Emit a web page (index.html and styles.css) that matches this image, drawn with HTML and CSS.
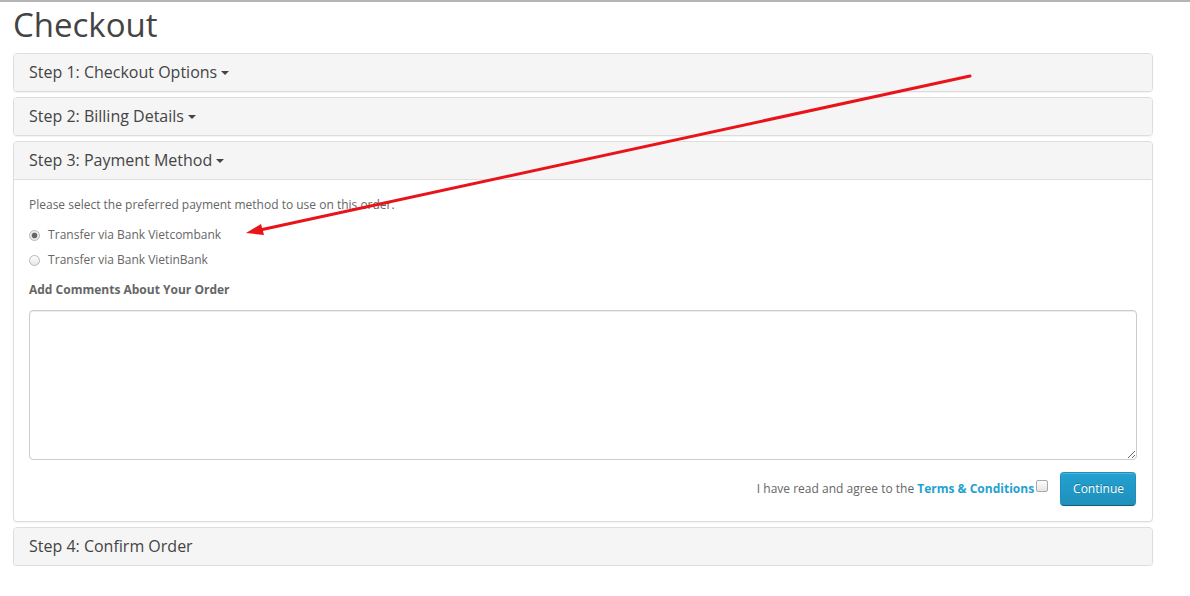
FILE: index.html
```html
<!DOCTYPE html>
<html lang="en">
  <head>
    <meta charset="UTF-8" />
    <meta name="viewport" content="width=device-width, initial-scale=1.0" />
    <title>Checkout</title>
    <link rel="stylesheet" href="styles.css">
  </head>
  <body>
    <div id="content">
      <h1>Checkout</h1>
      <div class="panel-group">
        <div class="panel">
          <div class="panel-heading">Step 1: Checkout Options <span class="caret"></span></div>
        </div>
        <div class="panel">
          <div class="panel-heading">Step 2: Billing Details <span class="caret"></span></div>
        </div>
        <div class="panel">
          <div class="panel-heading">Step 3: Payment Method <span class="caret"></span></div>
          <div class="panel-body">
            <p>Please select the preferred payment method to use on this order.</p>
            <div class="radio">
              <label><input type="radio" name="payment_method" checked /> Transfer via Bank Vietcombank</label>
            </div>
            <div class="radio">
              <label><input type="radio" name="payment_method" /> Transfer via Bank VietinBank</label>
            </div>
            <p><strong>Add Comments About Your Order</strong></p>
            <textarea class="comment" rows="8"></textarea>
            <div class="buttons">
              <span class="agree">I have read and agree to the <a href="#" class="terms">Terms &amp; Conditions</a></span>
              <input type="checkbox" class="check" />
              <button class="btn-primary">Continue</button>
            </div>
          </div>
        </div>
        <div class="panel">
          <div class="panel-heading">Step 4: Confirm Order</div>
        </div>
      </div>
    </div>

    <!-- annotation arrow drawn over the page -->
    <svg class="arrow" width="1190" height="596" viewBox="0 0 1190 596">
      <line x1="970" y1="76" x2="260" y2="230" stroke="#e8141a" stroke-width="3" stroke-linecap="round" />
      <polygon points="246,233 264,235 261,224" fill="#e8141a" />
    </svg>
  </body>
</html>
```

FILE: styles.css
```css
/* General Page Styling */
body {
  margin: 0;
  font-family: "Open Sans", "DejaVu Sans", sans-serif;
  font-size: 12px;
  line-height: 20px;
  color: #666666;
  background: #ffffff;
  border-top: 2px solid #b4b4b4;
}

#content {
  width: 1140px;
  padding-left: 13px;
}

h1 {
  font-size: 33px;
  font-weight: normal;
  line-height: 36px;
  color: #444444;
  margin: 5px 0 10px 0;
}

/* Panels */
.panel {
  border: 1px solid #dddddd;
  border-radius: 4px;
  background: #ffffff;
  box-shadow: 0 1px 1px rgba(0, 0, 0, 0.05);
}

.panel + .panel {
  margin-top: 5px;
}

.panel-heading {
  background-color: #f5f5f5;
  padding: 10px 15px;
  font-size: 16px;
  line-height: 17px;
  height: 17px;
  color: #444444;
  border-radius: 3px;
}

.panel-body {
  border-top: 1px solid #dddddd;
  padding: 15px;
}

.caret {
  display: inline-block;
  width: 0;
  height: 0;
  vertical-align: middle;
  border-top: 4px solid #444444;
  border-left: 4px solid transparent;
  border-right: 4px solid transparent;
  position: relative;
  top: -1px;
}

p {
  margin: 0 0 10px 0;
}

strong {
  font-weight: bold;
}

/* Radios */
.radio {
  margin: 10px 0;
}

.radio + .radio {
  margin-top: -5px;
}

.radio label {
  display: block;
  min-height: 20px;
  padding-left: 20px;
}

.radio input {
  appearance: none;
  width: 11px;
  height: 11px;
  margin: 0 5px 0 -20px;
  border: 1px solid #b8b8b8;
  border-radius: 50%;
  background: linear-gradient(#fdfdfd, #e6e6e6);
  vertical-align: -2px;
}

.radio input:checked {
  background: radial-gradient(circle, #666666 0, #666666 2.3px, #ececec 3.3px);
}

/* Comments */
.comment {
  display: block;
  box-sizing: border-box;
  width: 100%;
  height: 150px;
  border: 1px solid #cccccc;
  border-radius: 4px;
  box-shadow: inset 0 1px 1px rgba(0, 0, 0, 0.075);
  font-family: "Open Sans", sans-serif;
  margin-bottom: 12px;
}

.buttons {
  display: flex;
  justify-content: flex-end;
  align-items: center;
}

.agree {
  font-size: 12px;
}

.terms {
  color: #23a1d1;
  font-weight: bold;
  text-decoration: none;
}

.check {
  appearance: none;
  width: 12px;
  height: 12px;
  margin: 0 12px 6px 2px;
  border: 1px solid #a9a9a9;
  border-radius: 2px;
  background: linear-gradient(#fdfdfd, #e4e4e4);
}

.btn-primary {
  font-family: "Open Sans", sans-serif;
  font-size: 12px;
  line-height: 20px;
  height: 34px;
  margin-right: 1px;
  padding: 0 11px 0 12px;
  color: #ffffff;
  background: linear-gradient(#23a1d1, #1f90bb);
  border: 1px solid #1f90bb;
  border-bottom-color: #145e7a;
  border-radius: 4px;
  text-shadow: 0 -1px 0 rgba(0, 0, 0, 0.25);
  box-shadow: inset 0 1px 0 rgba(255, 255, 255, 0.2), 0 1px 2px rgba(0, 0, 0, 0.05);
  cursor: pointer;
}

/* Annotation */
.arrow {
  position: absolute;
  top: 0;
  left: 0;
  pointer-events: none;
}
```
